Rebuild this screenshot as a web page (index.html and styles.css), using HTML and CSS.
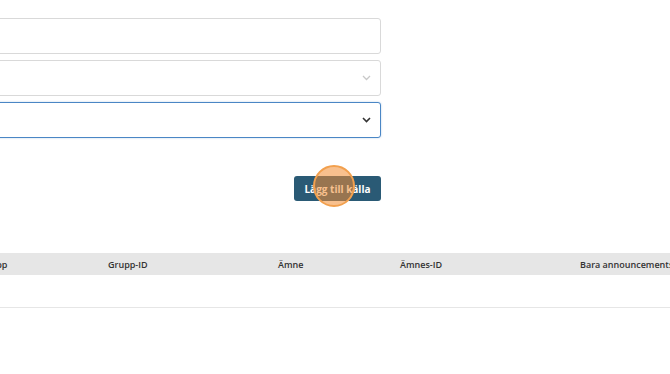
FILE: index.html
```html
<!DOCTYPE html>
<html lang="sv">
<head>
    <meta charset="UTF-8">
    <meta name="viewport" content="width=device-width, initial-scale=1.0">
    <title>Källor</title>
    <link rel="stylesheet" href="styles.css">
</head>
<body>
    <form class="kalla-form">
        <input type="text" class="falt">
        <div class="valj">
            <select class="falt falt-select"></select>
            <svg class="pil pil-ljus" width="9" height="6" viewBox="0 0 9 6"><path d="M1 1l3.5 3.5L8 1" fill="none" stroke="#c8c8c8" stroke-width="1.3"/></svg>
        </div>
        <div class="valj">
            <select class="falt falt-select falt-aktiv"></select>
            <svg class="pil" width="9" height="6" viewBox="0 0 9 6"><path d="M1 1l3.5 3.5L8 1" fill="none" stroke="#333" stroke-width="1.6"/></svg>
        </div>
        <div class="knapp-rad">
            <button type="button" class="knapp">Lägg till källa</button>
            <span class="klick"></span>
        </div>
    </form>

    <div class="tabell">
        <div class="tabell-huvud">
            <span>Grupp</span>
            <span>Grupp-ID</span>
            <span>Ämne</span>
            <span>Ämnes-ID</span>
            <span>Bara announcements</span>
        </div>
        <div class="tabell-rad"></div>
    </div>
</body>
</html>
```

FILE: styles.css
```css
body {
    margin: 0;
    font-family: 'Open Sans', sans-serif;
    background-color: #fff;
    overflow: hidden;
}

.kalla-form {
    margin: 18px 0 0 -30px;
    width: 411px;
    display: flex;
    flex-direction: column;
    gap: 6px;
}

.falt {
    display: block;
    width: 100%;
    height: 36px;
    border: 1px solid #d9d9d9;
    border-radius: 3px;
    background: #fff;
    box-sizing: border-box;
    margin: 0;
    padding: 0 10px;
}

.falt-select {
    appearance: none;
    -webkit-appearance: none;
}

.falt-aktiv {
    border: 1px solid #4a86c5;
    box-shadow: 0 0 2px rgba(74, 134, 197, 0.4);
}

.valj {
    position: relative;
}

.pil {
    position: absolute;
    right: 10px;
    top: 15px;
}

.knapp-rad {
    position: relative;
    display: flex;
    justify-content: flex-end;
    margin-top: 32px;
}

.knapp {
    width: 87px;
    height: 25px;
    border: none;
    border-radius: 3px;
    background-color: #2a5a75;
    color: #fff;
    font-family: 'Open Sans', sans-serif;
    font-weight: 700;
    font-size: 10px;
    padding: 0;
}

.klick {
    position: absolute;
    left: 343px;
    top: -11px;
    width: 38px;
    height: 38px;
    border-radius: 50%;
    border: 2px solid #f2a04e;
    background-color: rgba(242, 140, 50, 0.55);
}

.tabell {
    margin: 52px 0 0 -20px;
    width: 720px;
}

.tabell-huvud {
    display: grid;
    grid-template-columns: 128px 170px 122px 180px 1fr;
    height: 22px;
    align-items: center;
    background-color: #e6e6e6;
    font-size: 9px;
    font-weight: 600;
    color: #333;
}

.tabell-rad {
    height: 32px;
    border-bottom: 1px solid #e6e6e6;
}
```
